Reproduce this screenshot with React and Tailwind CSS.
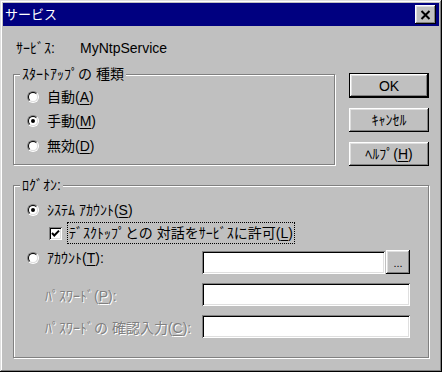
const raised =
  "shadow-[inset_-1px_-1px_#000,inset_1px_1px_#fff,inset_-2px_-2px_#808080,inset_2px_2px_#dfdfdf]"
const sunken =
  "shadow-[inset_1px_1px_#808080,inset_-1px_-1px_#fff,inset_2px_2px_#000,inset_-2px_-2px_#dfdfdf]"
const disabled = "text-[#808080] [text-shadow:1px_1px_0_#fff]"

function Radio({ checked }) {
  return (
    <span className="flex h-[12px] w-[12px] shrink-0 items-center justify-center rounded-full border border-t-[#808080] border-l-[#808080] border-b-white border-r-white">
      <span className="flex h-[10px] w-[10px] items-center justify-center rounded-full border border-t-black border-l-black border-b-[#dfdfdf] border-r-[#dfdfdf] bg-white">
        {checked && <span className="h-[4px] w-[4px] rounded-full bg-black" />}
      </span>
    </span>
  )
}

function Key({ children }) {
  return <span className="underline underline-offset-2">{children}</span>
}

function Group({ label, className, children }) {
  return (
    <div
      className={
        "relative border border-[#808080] shadow-[inset_1px_1px_#fff,1px_1px_#fff] " +
        className
      }
    >
      <span className="absolute top-[-9px] left-[6px] bg-[#c0c0c0] px-[2px] leading-[16px]">
        {label}
      </span>
      {children}
    </div>
  )
}

function Button({ children, primary }) {
  return (
    <div
      className={
        "flex w-[80px] items-center justify-center bg-[#c0c0c0] leading-[16px] " +
        raised +
        (primary ? " h-[25px] border border-black" : " h-[24px]")
      }
    >
      {children}
    </div>
  )
}

export default function App() {
  return (
    <div className="h-[372px] w-[442px] bg-[#c0c0c0] p-[3px] text-[14px] text-black font-['Liberation_Sans','Noto_Sans_CJK_JP',sans-serif] shadow-[inset_-1px_-1px_#000,inset_1px_1px_#dfdfdf,inset_-2px_-2px_#808080,inset_2px_2px_#fff]">
      {/* title bar */}
      <div className="flex h-[23px] items-center justify-between bg-[#000080] pl-[2px] pr-[3px]">
        <span className="text-[13px] leading-[16px] text-white">サービス</span>
        <div className={"flex h-[19px] w-[21px] items-center justify-center bg-[#c0c0c0] " + raised}>
          <svg width="11" height="10" viewBox="0 0 11 10">
            <path d="M1.5 1 L9.5 9 M9.5 1 L1.5 9" stroke="#000" strokeWidth="2" />
          </svg>
        </div>
      </div>

      <div className="flex flex-col px-[10px]">
        <div className="mt-[14px] ml-[3px] flex h-[16px] items-center leading-[16px]">
          <span className="w-[64px]">ｻｰﾋﾞｽ:</span>
          <span>MyNtpService</span>
        </div>

        <div className="mt-[17px] flex items-start">
          <Group label="ｽﾀｰﾄｱｯﾌﾟの 種類" className="mt-[1px] h-[91px] w-[322px] pt-[10px] pl-[13px]">
            <div className="flex flex-col">
              <label className="flex h-[24px] items-center">
                <Radio />
                <span className="ml-[8px] leading-[16px]">
                  自動(<Key>A</Key>)
                </span>
              </label>
              <label className="flex h-[24px] items-center">
                <Radio checked />
                <span className="ml-[8px] leading-[16px]">
                  手動(<Key>M</Key>)
                </span>
              </label>
              <label className="flex h-[25px] items-center">
                <Radio />
                <span className="ml-[8px] leading-[16px]">
                  無効(<Key>D</Key>)
                </span>
              </label>
            </div>
          </Group>

          <div className="ml-[14px] flex flex-col gap-[10px]">
            <Button primary>OK</Button>
            <Button>ｷｬﾝｾﾙ</Button>
            <Button>
              ﾍﾙﾌﾟ(<Key>H</Key>)
            </Button>
          </div>
        </div>

        <Group label="ﾛｸﾞｵﾝ:" className="mt-[19px] h-[173px] pt-[16px] pl-[13px]">
          <div className="flex flex-col">
            <label className="flex h-[16px] items-center">
              <Radio checked />
              <span className="ml-[8px] leading-[16px]">
                ｼｽﾃﾑ ｱｶｳﾝﾄ(<Key>S</Key>)
              </span>
            </label>

            <div className="mt-[4px] flex h-[22px] items-center">
              <div className={"ml-[22px] flex h-[13px] w-[13px] items-center justify-center bg-white " + sunken}>
                <svg width="9" height="9" viewBox="0 0 9 9">
                  <path d="M1 4 L3.3 6.5 L8 1.6" fill="none" stroke="#000" strokeWidth="2" />
                </svg>
              </div>
              <span className="ml-[5px] flex h-[22px] items-center border border-dotted border-black px-[1px] leading-[16px]">
                ﾃﾞｽｸﾄｯﾌﾟとの 対話をｻｰﾋﾞｽに許可(<Key>L</Key>)
              </span>
            </div>

            <div className="mt-[6px] flex items-start">
              <label className="flex h-[16px] w-[175px] items-center">
                <Radio />
                <span className="ml-[8px] leading-[16px]">
                  ｱｶｳﾝﾄ(<Key>T</Key>):
                </span>
              </label>
              <div className={"mt-[1px] h-[23px] w-[183px] bg-white " + sunken} />
              <div className={"ml-[1px] flex h-[24px] w-[24px] items-end justify-center bg-[#c0c0c0] pb-[5px] text-[11px] leading-[11px] " + raised}>
                ...
              </div>
            </div>

            <div className="mt-[9px] flex items-center">
              <span className={"w-[175px] pl-[18px] pt-[3px] leading-[16px] " + disabled}>
                ﾊﾟｽﾜｰﾄﾞ(<Key>P</Key>):
              </span>
              <div className={"h-[23px] w-[208px] bg-white " + sunken} />
            </div>

            <div className="mt-[9px] flex items-center">
              <span className={"w-[175px] pl-[18px] pt-[3px] leading-[16px] whitespace-nowrap " + disabled}>
                ﾊﾟｽﾜｰﾄﾞの 確認入力(<Key>C</Key>):
              </span>
              <div className={"h-[23px] w-[208px] bg-white " + sunken} />
            </div>
          </div>
        </Group>
      </div>
    </div>
  )
}
